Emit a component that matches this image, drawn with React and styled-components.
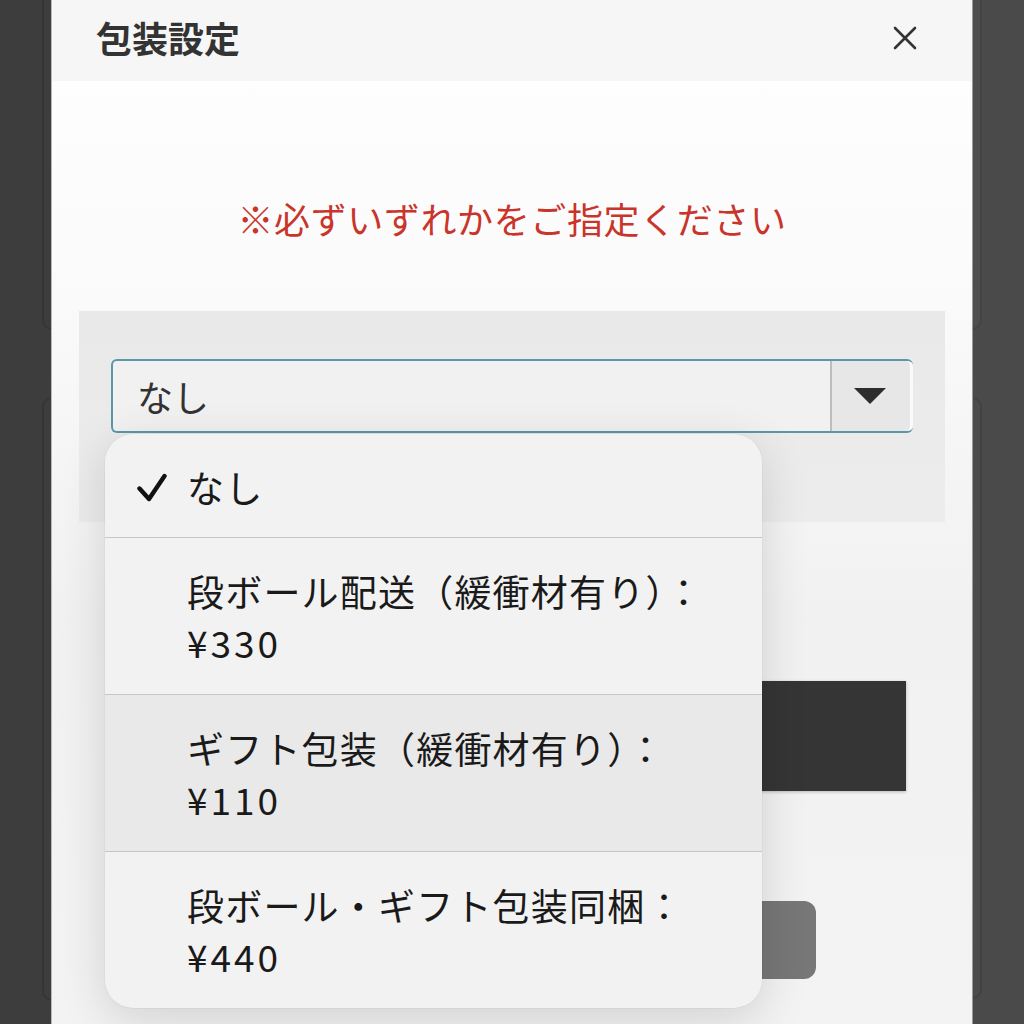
import React from 'react';
import styled, { createGlobalStyle } from 'styled-components';

const GlobalStyle = createGlobalStyle`
  html, body {
    margin: 0;
    padding: 0;
    width: 1024px;
    height: 1024px;
    overflow: hidden;
    font-family: "Noto Sans CJK JP", "Noto Sans", sans-serif;
  }
`;

// --- page underneath the modal ---
const Page = styled.div`
  position: relative;
  width: 1024px;
  height: 1024px;
  display: grid;
  grid-template-columns: 1fr 1fr;
  overflow: hidden;
`;

const PageColumn = styled.div`
  background: ${(p) => p.$bg};
  display: flex;
  flex-direction: column;
  gap: 67px;
  padding: ${(p) => (p.$side === 'left' ? '0 0 0 42px' : '0 42px 0 0')};
`;

const GhostCard = styled.div`
  height: ${(p) => p.$h}px;
  margin-top: ${(p) => p.$mt || 0}px;
  border: 2px solid rgba(0, 0, 0, 0.12);
  border-radius: 10px;
  background: ${(p) => p.$bg};
`;

// --- modal ---
const Modal = styled.div`
  position: absolute;
  left: 52px;
  top: 0;
  width: 920px;
  height: 1024px;
  display: flex;
  flex-direction: column;
  background: linear-gradient(to bottom, #ffffff 0%, #fbfbfb 25%, #f1f1f1 60%, #f3f3f3 100%);
  box-shadow: -1px 0 0 #b9b9b9, 1px 0 0 #9a9a9a;
`;

const Header = styled.div`
  height: 81px;
  flex-shrink: 0;
  background: #f6f6f6;
  display: flex;
  align-items: center;
  justify-content: space-between;
  padding: 0 47px 6px 44px;
  box-sizing: border-box;
`;

const Title = styled.h2`
  margin: 0;
  font-size: 36px;
  font-weight: 700;
  color: #333;
  line-height: 1.2;
`;

const CloseButton = styled.button`
  width: 40px;
  height: 40px;
  border: none;
  background: transparent;
  padding: 0;
  display: flex;
  align-items: center;
  justify-content: center;
`;

const Body = styled.div`
  display: flex;
  flex-direction: column;
  padding: 110px 27px 0;
`;

const Notice = styled.p`
  margin: 0;
  text-align: center;
  color: #c9342b;
  font-size: 36px;
  line-height: 54px;
  letter-spacing: 0.6px;
`;

const SelectPanel = styled.div`
  margin-top: 66px;
  background: linear-gradient(to bottom, #e9e9e9, #ececec);
  padding: 48px 32px 89px;
`;

const SelectBox = styled.div`
  height: 74px;
  box-sizing: border-box;
  display: flex;
  border: 2px solid #5a97aa;
  border-right: none;
  border-radius: 6px;
  background: #f1f1f1;
  overflow: hidden;
`;

const SelectValue = styled.div`
  flex: 1;
  display: flex;
  align-items: center;
  padding-left: 24px;
  font-size: 36px;
  color: #333;
`;

const ArrowButton = styled.div`
  width: 78px;
  display: flex;
  align-items: center;
  justify-content: center;
  background: #e7e7e7;
  border-left: 2px solid #bdbdbd;
  border-right: 3px solid #fafafa;
  border-radius: 0 6px 6px 0;
`;

const Triangle = styled.div`
  width: 0;
  height: 0;
  border-left: 16px solid transparent;
  border-right: 16px solid transparent;
  border-top: 16px solid #2d2d2d;
  margin-right: 2px;
`;

const DarkButton = styled.div`
  margin: 159px 39px 0 66px;
  height: 110px;
  background: #353535;
  box-shadow: 0 1px 3px rgba(0, 0, 0, 0.25);
`;

const GrayButton = styled.div`
  margin: 110px 129px 0 129px;
  height: 78px;
  background: #777;
  border-radius: 12px;
`;

// --- native picker popover ---
const Popover = styled.div`
  position: absolute;
  left: 53px;
  top: 434px;
  width: 657px;
  border-radius: 28px;
  background: #f2f2f2;
  box-shadow: 0 12px 48px rgba(0, 0, 0, 0.14), 0 0 0 0.5px rgba(0, 0, 0, 0.06);
  overflow: hidden;
`;

const Option = styled.div`
  display: flex;
  padding: 28px 24px ${(p) => (p.$single ? 24 : 26)}px 32px;
  background: ${(p) => (p.$active ? '#e9e9e9' : 'transparent')};
  & + & {
    border-top: 1px solid #c6c6c6;
  }
`;

const CheckSlot = styled.div`
  width: 50px;
  height: 51px;
  flex-shrink: 0;
  display: flex;
  align-items: center;
`;

const OptionText = styled.div`
  font-size: 37px;
  line-height: 51px;
  letter-spacing: 1.2px;
  color: #1a1a1a;
`;

const Price = styled.div`
  letter-spacing: 3px;
`;

const CloseIcon = () => (
  <svg width="24" height="24" viewBox="0 0 24 24">
    <path d="M2 2 L22 22 M22 2 L2 22" stroke="#333" strokeWidth="2.6" strokeLinecap="round" />
  </svg>
);

const CheckIcon = () => (
  <svg width="30" height="30" viewBox="0 0 30 30">
    <path d="M2.5 15.5 L12 26 L27.5 3" fill="none" stroke="#111" strokeWidth="4.4" strokeLinecap="round" strokeLinejoin="round" />
  </svg>
);

const options = [
  { label: 'なし', selected: true },
  { label: '段ボール配送（緩衝材有り）：', price: '¥330' },
  { label: 'ギフト包装（緩衝材有り）：', price: '¥110', active: true },
  { label: '段ボール・ギフト包装同梱：', price: '¥440' },
];

const App = () => {
  return (
    <>
      <GlobalStyle />
      <Page>
        <PageColumn $side="left" $bg="#3d3d3d">
          <GhostCard $h={336} $mt={-10} $bg="#3d3d3d" />
          <GhostCard $h={600} $bg="#3d3d3d" />
        </PageColumn>
        <PageColumn $side="right" $bg="#4a4a4a">
          <GhostCard $h={336} $mt={-10} $bg="#4e4e4e" />
          <GhostCard $h={598} $bg="#4c4c4c" />
        </PageColumn>

        <Modal>
          <Header>
            <Title>包装設定</Title>
            <CloseButton aria-label="閉じる">
              <CloseIcon />
            </CloseButton>
          </Header>
          <Body>
            <Notice>※必ずいずれかをご指定ください</Notice>
            <SelectPanel>
              <SelectBox>
                <SelectValue>なし</SelectValue>
                <ArrowButton>
                  <Triangle />
                </ArrowButton>
              </SelectBox>
            </SelectPanel>
            <DarkButton />
            <GrayButton />
          </Body>

          <Popover>
            {options.map((o) => (
              <Option key={o.label} $single={!o.price} $active={o.active}>
                <CheckSlot>{o.selected && <CheckIcon />}</CheckSlot>
                <OptionText>
                  {o.label}
                  {o.price && <Price>{o.price}</Price>}
                </OptionText>
              </Option>
            ))}
          </Popover>
        </Modal>
      </Page>
    </>
  );
};

export default App;
